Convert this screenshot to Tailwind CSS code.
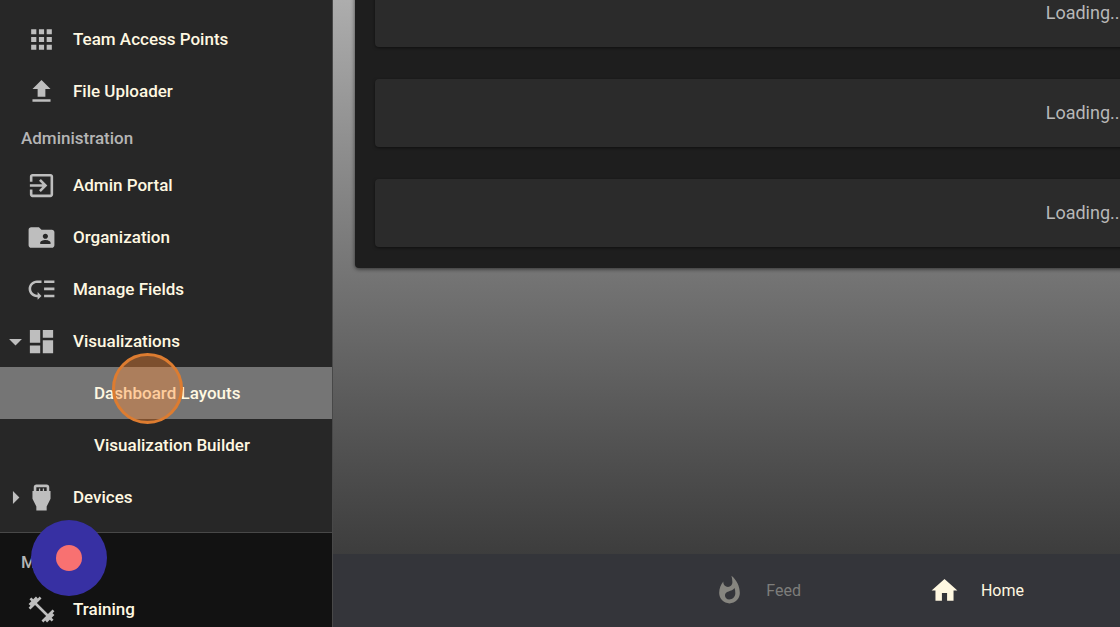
<!DOCTYPE html>
<html lang="en">
<head>
  <meta charset="UTF-8" />
  <meta name="viewport" content="width=device-width, initial-scale=1.0" />
  <title>Dashboard Layouts</title>
  <script src="https://cdn.jsdelivr.net/npm/@tailwindcss/browser@4"></script>
</head>
<body class="relative flex h-screen overflow-hidden bg-[#121212] font-[Roboto,sans-serif]">

  <!-- Sidebar -->
  <nav class="flex w-[333px] shrink-0 flex-col overflow-hidden border-r border-[#484848] text-[17px] leading-[26px] font-medium text-[#fff8e1]">
    <div class="shrink-0 border-b border-[#484848] bg-[#272727] pt-[13px] pb-[9px]">
      <a href="#" class="flex h-[52px] items-center pl-[26px]">
        <svg class="mr-4 size-[31px] fill-[#bebebe]" viewBox="0 0 24 24"><path d="M4 8h4V4H4v4zm6 12h4v-4h-4v4zm-6 0h4v-4H4v4zm0-6h4v-4H4v4zm6 0h4v-4h-4v4zm6-10v4h4V4h-4zm-6 4h4V4h-4v4zm6 6h4v-4h-4v4zm0 6h4v-4h-4v4z"/></svg>
        Team Access Points
      </a>
      <a href="#" class="flex h-[52px] items-center pl-[26px]">
        <svg class="mr-4 size-[31px] fill-[#bebebe]" viewBox="0 0 24 24"><path d="M9 16h6v-6h4l-7-7-7 7h4zm-4 2h14v2H5z"/></svg>
        File Uploader
      </a>
      <h2 class="flex h-[42px] items-center pl-[21px] text-[#b5b5b5]">Administration</h2>
      <a href="#" class="flex h-[52px] items-center pl-[26px]">
        <svg class="mr-4 size-[31px] fill-[#bebebe]" viewBox="0 0 24 24"><path d="M10.09 15.59L11.5 17l5-5-5-5-1.41 1.41L12.67 11H3v2h9.67l-2.58 2.59zM19 3H5c-1.11 0-2 .9-2 2v4h2V5h14v14H5v-4H3v4c0 1.1.89 2 2 2h14c1.1 0 2-.9 2-2V5c0-1.1-.9-2-2-2z"/></svg>
        Admin Portal
      </a>
      <a href="#" class="flex h-[52px] items-center pl-[26px]">
        <svg class="mr-4 size-[31px] fill-[#bebebe]" viewBox="0 0 24 24"><path d="M20 6h-8l-2-2H4c-1.1 0-1.99.9-1.99 2L2 18c0 1.1.9 2 2 2h16c1.1 0 2-.9 2-2V8c0-1.1-.9-2-2-2zm-5 3c1.1 0 2 .9 2 2s-.9 2-2 2-2-.9-2-2 .9-2 2-2zm4 8h-8v-1c0-1.33 2.67-2 4-2s4 .67 4 2v1z"/></svg>
        Organization
      </a>
      <a href="#" class="flex h-[52px] items-center pl-[26px]">
        <svg class="mr-4 size-[31px] fill-[#bebebe]" viewBox="0 0 24 24"><path d="M14 5h8v2h-8zm0 5.5h8v2h-8zm0 5.5h8v2h-8zM2 11.5C2 15.08 4.92 18 8.5 18H9v2l3-3-3-3v2h-.5C6.02 16 4 13.98 4 11.5S6.02 7 8.5 7H12V5H8.5C4.92 5 2 7.92 2 11.5z"/></svg>
        Manage Fields
      </a>
      <a href="#" class="flex h-[52px] items-center">
        <svg class="-mr-[5px] size-[31px] fill-[#bebebe]" viewBox="0 0 24 24"><path d="M7 10l5 5 5-5z"/></svg>
        <svg class="mr-4 size-[31px] fill-[#bebebe]" viewBox="0 0 24 24"><path d="M3 13h8V3H3v10zm0 8h8v-6H3v6zm10 0h8V11h-8v10zm0-18v6h8V3h-8z"/></svg>
        Visualizations
      </a>
      <a href="#" class="flex h-[52px] items-center bg-[#757575] pl-[94px]">Dashboard Layouts</a>
      <a href="#" class="flex h-[52px] items-center pl-[94px]">Visualization Builder</a>
      <a href="#" class="flex h-[52px] items-center">
        <svg class="-mr-[5px] size-[31px] fill-[#bebebe]" viewBox="0 0 24 24"><path d="M10 17l5-5-5-5z"/></svg>
        <svg class="mr-4 size-[31px] fill-[#bebebe]" viewBox="0 0 24 24"><path d="M18 7V4c0-1.1-.9-2-2-2H8c-1.1 0-2 .9-2 2v3H5v6l3 6v3h8v-3l3-6V7h-1zM8 4h8v3h-2V5h-1v2h-2V5h-1v2H8V4z"/></svg>
        Devices
      </a>
    </div>
    <div class="pt-2">
      <h2 class="flex h-[42px] items-center pl-[21px] text-[#b5b5b5]">More</h2>
      <a href="#" class="flex h-[52px] items-center pl-[26px]">
        <svg class="mr-4 size-[31px] fill-[#bebebe]" viewBox="0 0 24 24"><path d="M20.57 14.86L22 13.43 20.57 12 17 15.57 8.43 7 12 3.43 10.57 2 9.14 3.43 7.71 2 5.57 4.14 4.14 2.71 2.71 4.14l1.43 1.43L2 7.71l1.43 1.43L2 10.57 3.43 12 7 8.43 15.57 17 12 20.57 13.43 22l1.43-1.43L16.29 22l2.14-2.14 1.43 1.43 1.43-1.43-1.43-1.43L22 16.29z"/></svg>
        Training
      </a>
    </div>
  </nav>

  <div class="flex min-w-0 flex-1 flex-col overflow-hidden">
    <!-- Widgets, wider than the window -->
    <main class="min-h-0 flex-1 overflow-hidden bg-linear-to-b from-[#adadad] via-[#747474] to-[#3d3d3d] pl-[22px]">
      <div class="-mt-[41px] flex w-[1460px] flex-col gap-8 rounded-sm bg-[#1e1e1e] px-5 pt-5 pb-[21px] shadow-[0_1px_4px_rgba(0,0,0,0.6)]">
        <div class="flex h-[68px] items-center justify-center rounded-sm bg-[#2b2b2b] text-lg text-[#b8b8b8] shadow-[0_1px_3px_rgba(0,0,0,0.5)]">Loading...</div>
        <div class="flex h-[68px] items-center justify-center rounded-sm bg-[#2b2b2b] text-lg text-[#b8b8b8] shadow-[0_1px_3px_rgba(0,0,0,0.5)]">Loading...</div>
        <div class="flex h-[68px] items-center justify-center rounded-sm bg-[#2b2b2b] text-lg text-[#b8b8b8] shadow-[0_1px_3px_rgba(0,0,0,0.5)]">Loading...</div>
      </div>
    </main>

    <!-- Bottom tabs -->
    <footer class="flex h-[73px] shrink-0 items-center justify-end gap-32 bg-[#34353a] pr-24 text-base">
      <a href="#" class="flex items-center gap-[21px] text-[#7d7d7b]">
        <svg class="size-[31px] fill-[#86857f]" viewBox="0 0 24 24"><path d="M13.5.67s.74 2.65.74 4.8c0 2.06-1.35 3.73-3.41 3.73-2.07 0-3.63-1.67-3.63-3.73l.03-.36C5.21 7.51 4 10.62 4 14c0 4.42 3.58 8 8 8s8-3.58 8-8C20 8.61 17.41 3.8 13.5.67zM11.71 19c-1.78 0-3.22-1.4-3.22-3.14 0-1.62 1.05-2.76 2.81-3.12 1.77-.36 3.6-1.21 4.62-2.58.39 1.29.59 2.65.59 4.04 0 2.65-2.15 4.8-4.8 4.8z"/></svg>
        Feed
      </a>
      <a href="#" class="flex items-center gap-[21px] text-[#fff8e1]">
        <svg class="size-[31px] fill-[#fff8e1]" viewBox="0 0 24 24"><path d="M10 20v-6h4v6h5v-8h3L12 3 2 12h3v8z"/></svg>
        Home
      </a>
    </footer>
  </div>

  <!-- Click marker and record button -->
  <div class="pointer-events-none absolute top-[353px] left-[112px] size-[71px] rounded-full border-3 border-[#dd7c30] bg-[#ff8c37]/40"></div>
  <button type="button" aria-label="Record" class="absolute top-[520px] left-[31px] flex size-[76px] items-center justify-center rounded-full bg-[#3730a3]">
    <span class="size-[26px] rounded-full bg-[#f87171]"></span>
  </button>
</body>
</html>
